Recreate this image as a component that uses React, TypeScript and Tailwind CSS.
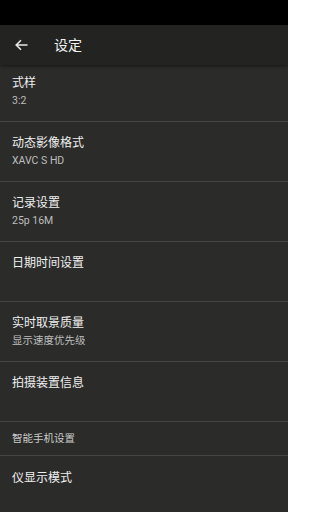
const font = { fontFamily: 'Roboto, "Noto Sans CJK SC", sans-serif' }

const items = [
  { title: '式样', sub: '3:2' },
  { title: '动态影像格式', sub: 'XAVC S HD' },
  { title: '记录设置', sub: '25p 16M' },
  { title: '日期时间设置', sub: '' },
  { title: '实时取景质量', sub: '显示速度优先级' },
  { title: '拍摄装置信息', sub: '' },
]

function Row({ title, sub, first }: { title: string; sub: string; first?: boolean }) {
  return (
    <div
      className={`${first ? 'h-[57px] pt-[10px]' : 'h-[60px] pt-[13px]'} border-b border-[#454644] px-3`}
    >
      <p className="text-[12px] leading-[16px] text-[#efefef]">{title}</p>
      {sub && <p className="mt-[3px] text-[10.5px] leading-[14px] text-[#bdbdbb]">{sub}</p>}
    </div>
  )
}

export default function App() {
  return (
    <div className="flex h-[512px] w-[288px] flex-col overflow-hidden bg-[#2b2c2a]" style={font}>
      {/* status bar */}
      <div className="h-[25px] bg-black" />

      {/* header */}
      <div className="relative z-10 flex h-[40px] items-center bg-[#232422] shadow-[0_1px_3px_rgba(0,0,0,0.5)]">
        <svg className="ml-[15px] h-[12px] w-[13px]" viewBox="0 0 13 12" fill="none">
          <path d="M12.5 6H1.5M6 1.2L1.2 6L6 10.8" stroke="#e6e6e6" strokeWidth="1.6" />
        </svg>
        <span className="ml-[26px] text-[14px] text-[#f2f2f2]">设定</span>
      </div>

      {/* list */}
      {items.map((item, i) => (
        <Row key={i} title={item.title} sub={item.sub} first={i === 0} />
      ))}

      <div className="flex h-[34px] items-center border-b border-[#454644] px-3">
        <span className="text-[10.5px] text-[#cacac8]">智能手机设置</span>
      </div>

      <div className="px-3 pt-[14px]">
        <p className="text-[12px] leading-[16px] text-[#efefef]">仪显示模式</p>
      </div>
    </div>
  )
}
